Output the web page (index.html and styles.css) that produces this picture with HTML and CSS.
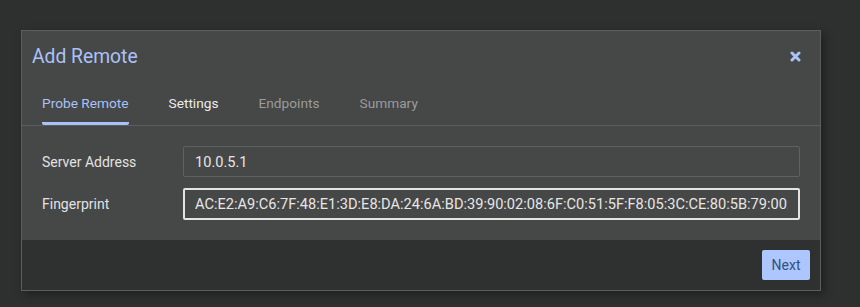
FILE: index.html
```html
<!DOCTYPE html>
<html lang="en">
<head>
    <meta charset="UTF-8">
    <meta name="viewport" content="width=device-width, initial-scale=1.0">
    <title>Add Remote</title>
    <link rel="stylesheet" href="styles.css">
</head>
<body>

<div class="modal">
    <div class="modal-header">
        <h2>Add Remote</h2>
        <span class="close">
            <svg width="11" height="11" viewBox="0 0 11 11">
                <path d="M2 2 L9 9 M9 2 L2 9" stroke="#a9c2f7" stroke-width="3" stroke-linecap="round"/>
            </svg>
        </span>
    </div>

    <!-- Tabs -->
    <div class="tabs">
        <a class="tab active">Probe Remote</a>
        <a class="tab done">Settings</a>
        <a class="tab">Endpoints</a>
        <a class="tab">Summary</a>
    </div>

    <div class="modal-body">
        <div class="form-row">
            <label for="address">Server Address</label>
            <input type="text" id="address" value="10.0.5.1">
        </div>
        <div class="form-row">
            <label for="fingerprint">Fingerprint</label>
            <input type="text" id="fingerprint" class="focused" value="AC:E2:A9:C6:7F:48:E1:3D:E8:DA:24:6A:BD:39:90:02:08:6F:C0:51:5F:F8:05:3C:CE:80:5B:79:00:9A:1E:44">
        </div>
    </div>

    <div class="modal-footer">
        <button class="next-button">Next</button>
    </div>
</div>

</body>
</html>
```

FILE: styles.css
```css
body {
    font-family: Roboto, "Liberation Sans", Arial, sans-serif;
    margin: 0;
    padding: 30px 0 0 21px;
    background-color: #2e2f2f;
    height: 307px;
    box-sizing: border-box;
    overflow: hidden;
}
.modal {
    width: 800px;
    box-sizing: border-box;
    background-color: #464747;
    border: 1px solid #5c5d5e;
    box-shadow: 3px 3px 8px rgba(0, 0, 0, 0.35);
}
.modal-header {
    height: 50px;
    padding: 0 19px 0 10px;
    display: flex;
    align-items: center;
    justify-content: space-between;
}
.modal-header h2 {
    margin: 0;
    font-size: 19.3px;
    font-weight: normal;
    color: #a9c2f7;
}
.close {
    display: flex;
    width: 11px;
    height: 11px;
    cursor: pointer;
}
.tabs {
    display: flex;
    gap: 40px;
    padding: 12px 20px 0 20px;
    border-bottom: 1px solid #5c5d5e;
}
.tab {
    font-size: 13.7px;
    line-height: 20px;
    padding-bottom: 9px;
    border-bottom: 3px solid transparent;
    color: #9b9c9c;
    cursor: pointer;
}
.tab.done {
    color: #ececec;
}
.tab.active {
    color: #a9c2f7;
    border-bottom-color: #a9c2f7;
    border-radius: 2px;
}
.modal-body {
    padding: 20px 20px 20px 20px;
    display: flex;
    flex-direction: column;
    gap: 11px;
}
.form-row {
    display: flex;
    align-items: center;
}
.form-row label {
    width: 141px;
    flex-shrink: 0;
    font-size: 14px;
    color: #e2e2e2;
}
.form-row input {
    flex: 1;
    min-width: 0;
    height: 31px;
    box-sizing: border-box;
    padding: 0 10px 0 11px;
    font-family: Roboto, "Liberation Sans", Arial, sans-serif;
    font-size: 14.6px;
    color: #e6e6e6;
    background-color: #464747;
    border: 1px solid #5f6061;
    border-radius: 2px;
    outline: none;
}
.form-row input.focused {
    height: 32px;
    padding-left: 10px;
    border: 2px solid #e4e4e4;
}
.modal-footer {
    background-color: #2f3030;
    padding: 10px;
    display: flex;
    justify-content: flex-end;
}
.next-button {
    width: 48px;
    height: 30px;
    padding: 0;
    font-family: Roboto, "Liberation Sans", Arial, sans-serif;
    font-size: 14px;
    color: #34507f;
    background-color: #adc6fd;
    border: none;
    border-radius: 2px;
    cursor: pointer;
}
```
